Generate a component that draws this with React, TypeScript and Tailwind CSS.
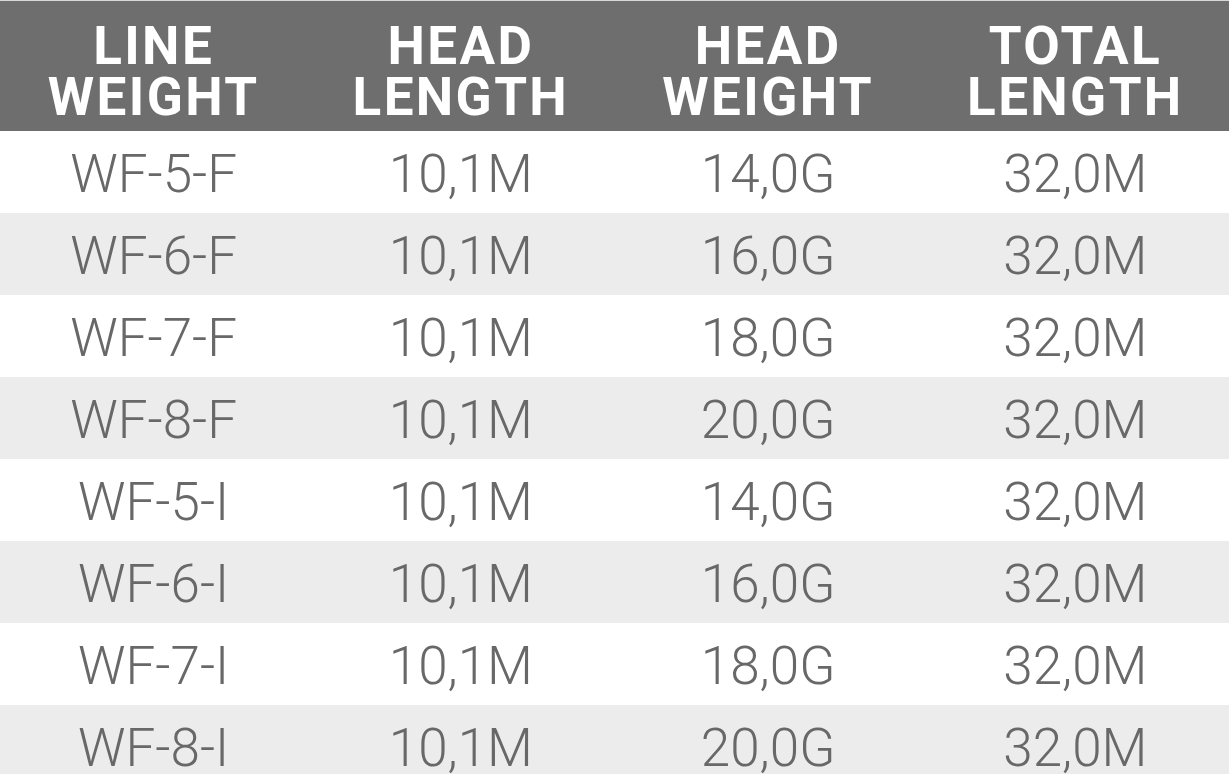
import React from "react";

const rows = [
  ["WF-5-F", "10,1M", "14,0G", "32,0M"],
  ["WF-6-F", "10,1M", "16,0G", "32,0M"],
  ["WF-7-F", "10,1M", "18,0G", "32,0M"],
  ["WF-8-F", "10,1M", "20,0G", "32,0M"],
  ["WF-5-I", "10,1M", "14,0G", "32,0M"],
  ["WF-6-I", "10,1M", "16,0G", "32,0M"],
  ["WF-7-I", "10,1M", "18,0G", "32,0M"],
  ["WF-8-I", "10,1M", "20,0G", "32,0M"],
];

const headers = [
  ["LINE", "WEIGHT"],
  ["HEAD", "LENGTH"],
  ["HEAD", "WEIGHT"],
  ["TOTAL", "LENGTH"],
];

export default function App() {
  return (
    <div className="w-[1229px] h-[774px] overflow-hidden bg-white" style={{ fontFamily: "Roboto, 'Noto Sans', sans-serif" }}>
      <div className="h-px bg-[#d8d8d8]" />
      <div className="grid grid-cols-4 h-[130px] bg-[#6e6e6e] items-center">
        {headers.map((h, i) => (
          <div key={i} className="flex flex-col items-center text-white font-bold text-[53px] leading-[51px] tracking-[0.045em] pt-[11px]">
            <span>{h[0]}</span>
            <span>{h[1]}</span>
          </div>
        ))}
      </div>
      {rows.map((r, i) => (
        <div key={i} className={`grid grid-cols-4 h-[82px] items-center ${i % 2 === 1 ? "bg-[#ececec]" : "bg-white"}`}>
          {r.map((c, j) => (
            <div key={j} className="text-center text-[#686868] font-light text-[53px] leading-none pt-[5px]">
              {c}
            </div>
          ))}
        </div>
      ))}
    </div>
  );
}
